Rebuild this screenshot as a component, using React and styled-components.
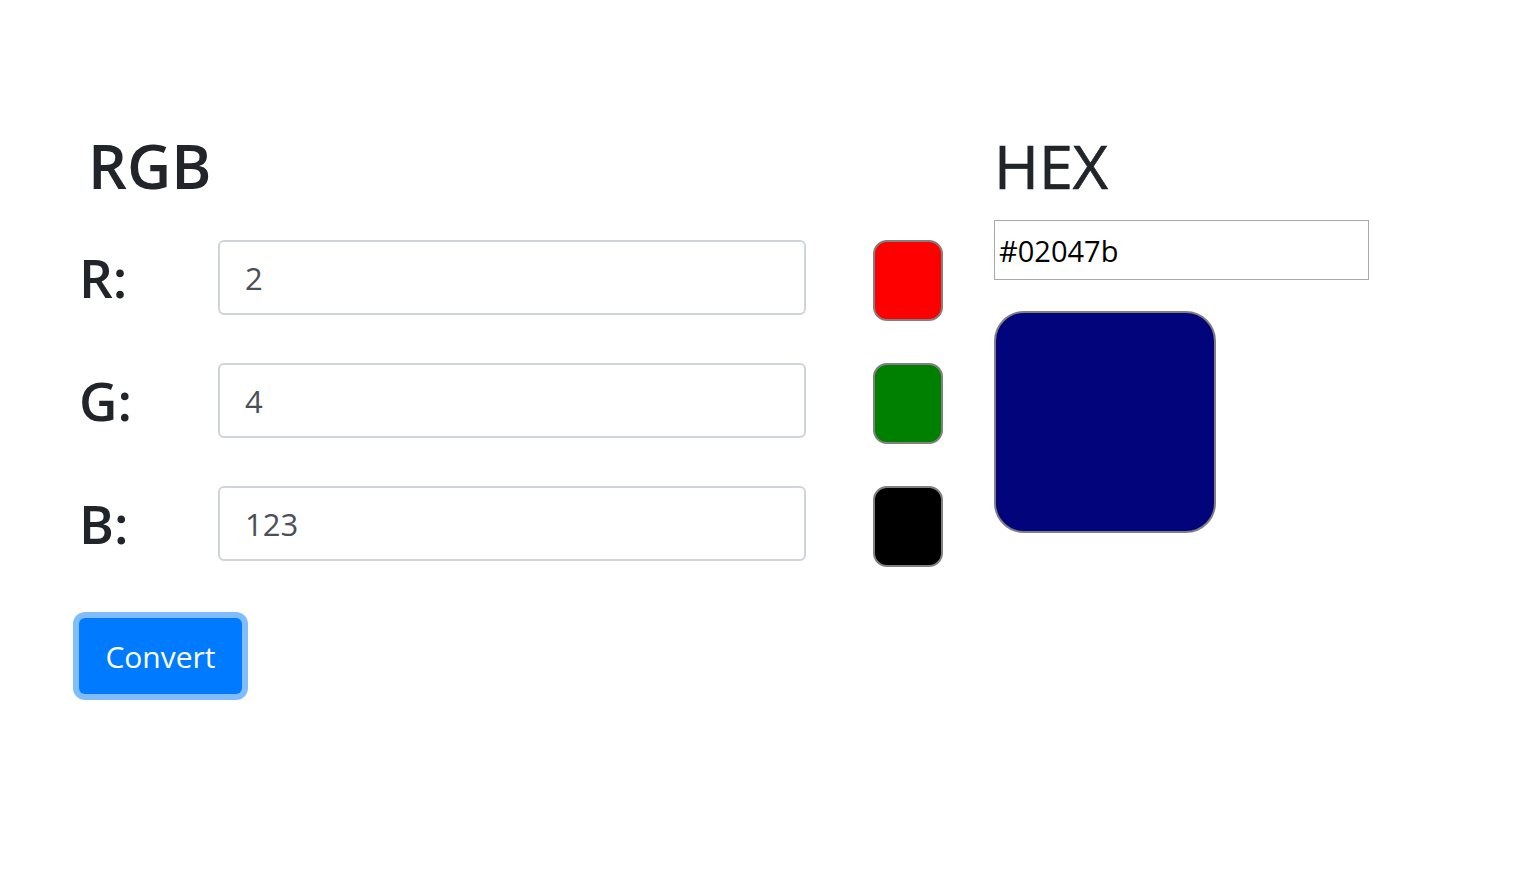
import React, { useState } from 'react';
import styled, { createGlobalStyle } from 'styled-components';

const GlobalStyle = createGlobalStyle`
  html, body {
    margin: 0;
    padding: 0;
    background: #fff;
  }
  body {
    font-family: "Open Sans", "Noto Sans", Arial, sans-serif;
    color: #212529;
  }
`;

const Page = styled.div`
  display: flex;
  align-items: flex-start;
  gap: 51px;
  padding: 129px 0 40px 80px;
`;

const Column = styled.div`
  display: flex;
  flex-direction: column;
  align-items: flex-start;
`;

const Heading = styled.h1`
  margin: 0 0 ${(p) => p.$gap}px ${(p) => p.$indent || 0}px;
  font-size: 61px;
  line-height: 1.2;
  font-weight: ${(p) => (p.$medium ? 400 : 600)};
  -webkit-text-stroke: ${(p) => (p.$medium ? '0.7px #212529' : '0')};
  color: #212529;
`;

const Row = styled.div`
  display: grid;
  grid-template-columns: 71px 588px 70px;
  column-gap: 67px;
  align-items: start;
  margin-bottom: 42px;
`;

const Label = styled.label`
  font-size: 53px;
  font-weight: 600;
  line-height: 75px;
  color: #212529;
  margin-left: -1px;
`;

const Field = styled.input`
  box-sizing: border-box;
  width: 588px;
  height: 75px;
  padding: 0 25px;
  border: 2px solid #ced4da;
  border-radius: 6px;
  font-family: inherit;
  font-size: 31px;
  color: #495057;
  outline: none;
`;

const Swatch = styled.div`
  box-sizing: border-box;
  width: ${(p) => p.$size}px;
  height: ${(p) => p.$height || p.$size}px;
  border: 2px solid #808080;
  border-radius: ${(p) => p.$radius}px;
  background: ${(p) => p.$color};
`;

const HexField = styled.input`
  box-sizing: border-box;
  width: 375px;
  height: 60px;
  margin: 0 0 31px 0;
  padding: 0 4px;
  border: 1px solid #a9a9a9;
  border-radius: 0;
  font-family: inherit;
  font-size: 29px;
  color: #000;
  outline: none;
`;

const Button = styled.button`
  box-sizing: border-box;
  margin: 9px 0 0 -1px;
  width: 163px;
  height: 76px;
  border: none;
  border-radius: 6px;
  background: #007bff;
  color: #fff;
  font-family: inherit;
  font-size: 30px;
  box-shadow: 0 0 0 6px #80bdff;
  cursor: pointer;
`;

const channels = [
  { key: 'r', label: 'R:', color: '#ff0000' },
  { key: 'g', label: 'G:', color: '#008000' },
  { key: 'b', label: 'B:', color: '#000000' },
];

const App = () => {
  const [rgb, setRgb] = useState({ r: '2', g: '4', b: '123' });

  const toHex = () =>
    '#' +
    ['r', 'g', 'b']
      .map((k) => Math.max(0, Math.min(255, parseInt(rgb[k], 10) || 0)).toString(16).padStart(2, '0'))
      .join('');

  const [hex, setHex] = useState(toHex());

  return (
    <>
      <GlobalStyle />
      <Page>
        <Column>
          <Heading $gap={38} $indent={8}>RGB</Heading>
          {channels.map((c) => (
            <Row key={c.key}>
              <Label>{c.label}</Label>
              <Field
                value={rgb[c.key]}
                onChange={(e) => setRgb({ ...rgb, [c.key]: e.target.value })}
              />
              <Swatch $size={70} $height={81} $radius={14} $color={c.color} />
            </Row>
          ))}
          <Button onClick={() => setHex(toHex())}>Convert</Button>
        </Column>
        <Column>
          <Heading $gap={18} $medium>HEX</Heading>
          <HexField value={hex} onChange={(e) => setHex(e.target.value)} />
          <Swatch $size={222} $radius={30} $color={hex} />
        </Column>
      </Page>
    </>
  );
};

export default App;
